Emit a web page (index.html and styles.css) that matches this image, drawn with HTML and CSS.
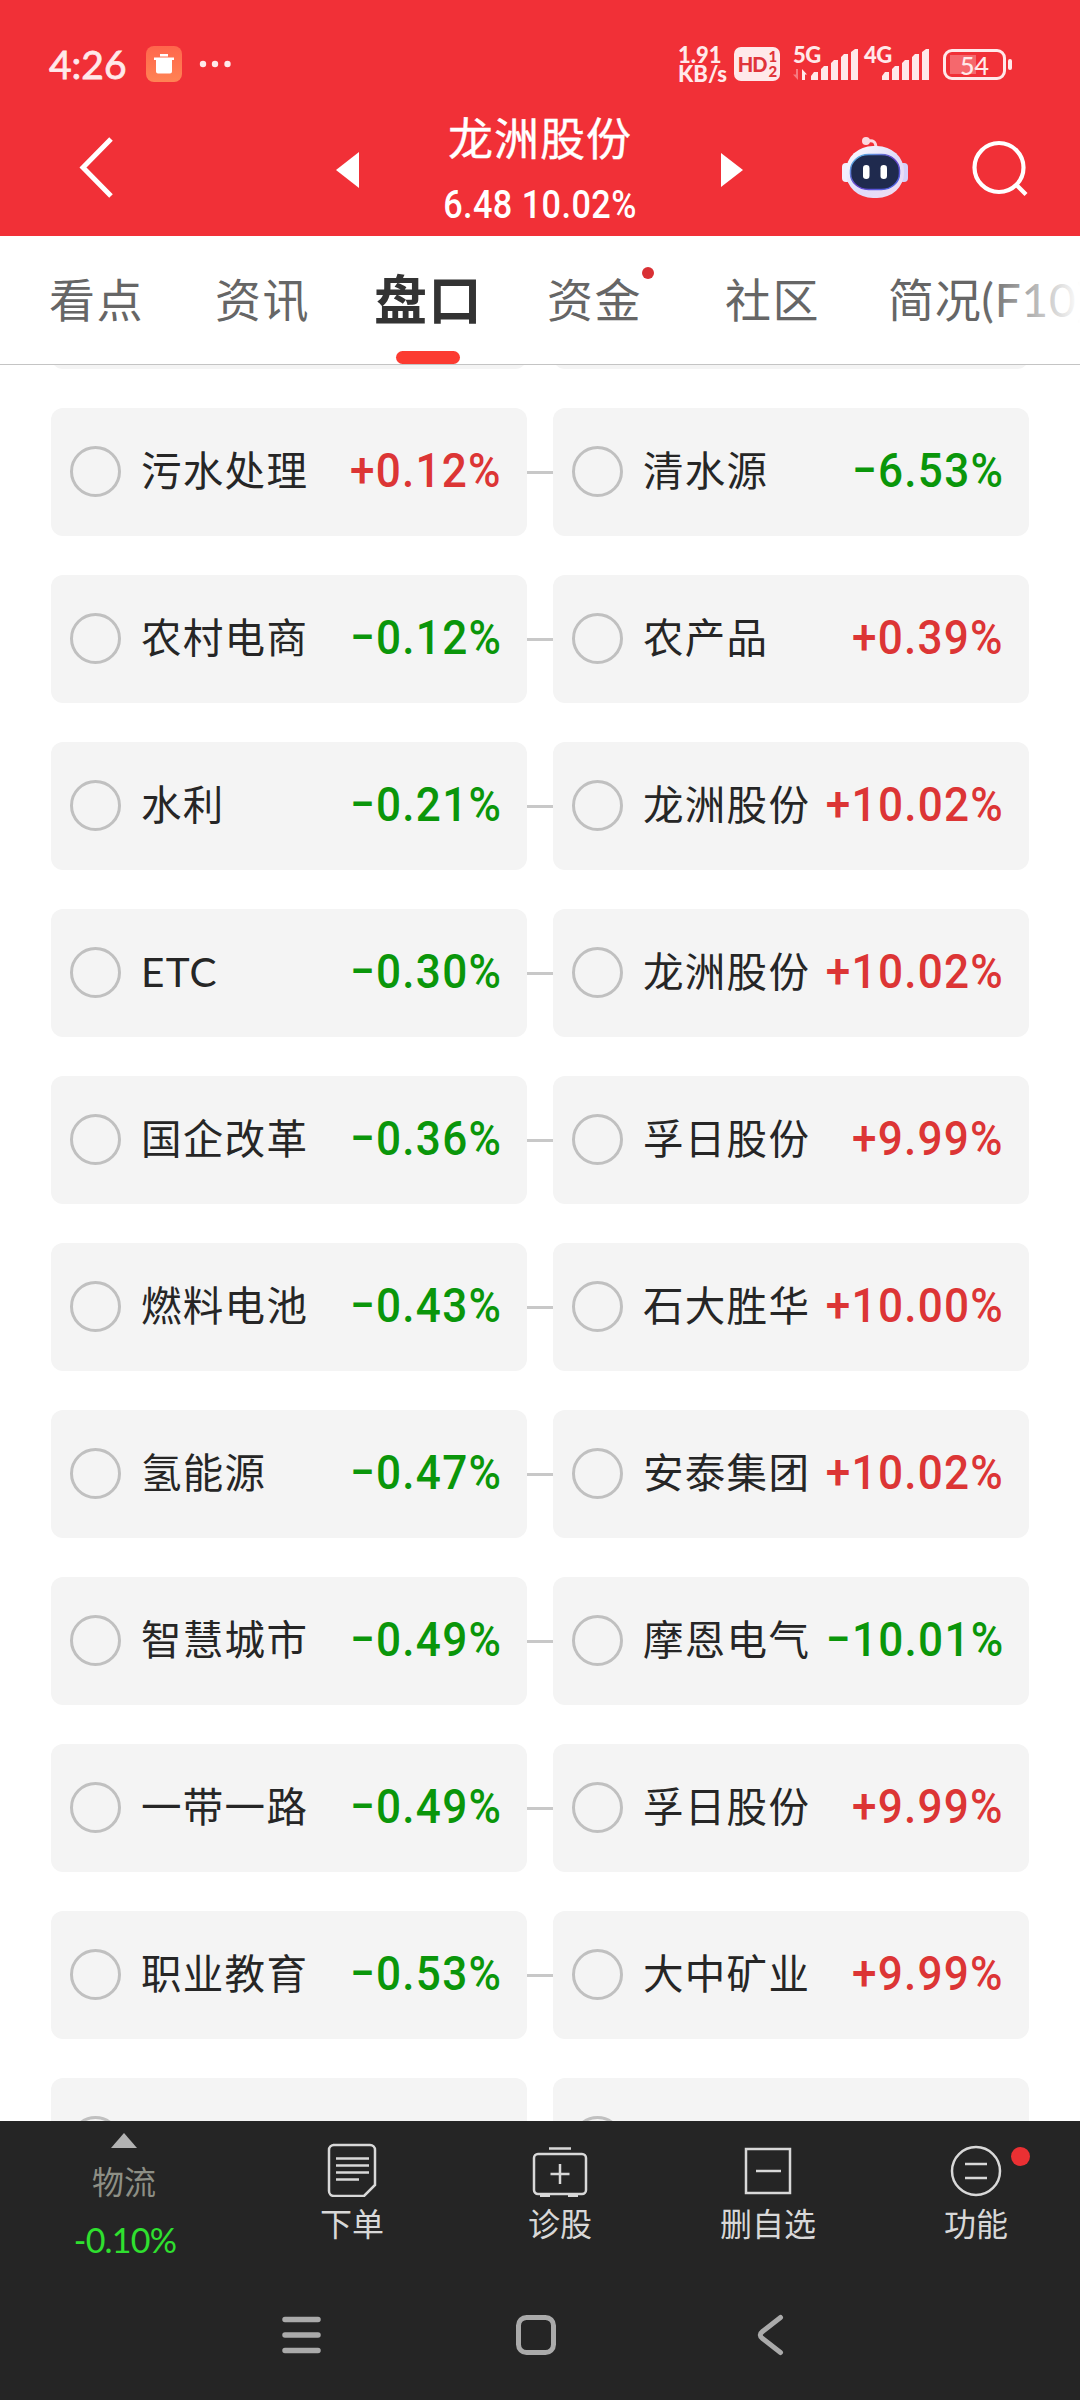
FILE: index.html
```html
<!DOCTYPE html>
<html lang="zh-CN">
<head>
  <meta charset="UTF-8" />
  <meta name="viewport" content="width=device-width, initial-scale=1.0"/>
  <title>龙洲股份 - 盘口</title>
  <link rel="stylesheet" href="styles.css">
</head>
<body>
  <header class="header">
    <div class="status-bar">
      <span class="time">4:26</span>
      <svg class="app-icon" width="36" height="36" viewBox="0 0 36 36">
        <defs>
          <linearGradient id="orange" x1="0" y1="0" x2="0" y2="1">
            <stop offset="0" stop-color="#ff664c"/>
            <stop offset="1" stop-color="#ff8354"/>
          </linearGradient>
        </defs>
        <rect width="36" height="36" rx="8" fill="url(#orange)"/>
        <path d="M14 8h8v2.500h-8zM8 11.500h20v2.500h-2v11.500a2 2 0 0 1-2 2H12a2 2 0 0 1-2-2V14H8z" fill="#fff"/>
      </svg>
      <svg class="more" width="32" height="8" viewBox="0 0 32 8" fill="#ffe9ea">
        <circle cx="4" cy="4" r="3.200"/><circle cx="16" cy="4" r="3.200"/><circle cx="28.500" cy="4" r="3.200"/>
      </svg>
      <div class="speed"><span>1.91</span><span>KB/s</span></div>
      <div class="hd"><b>HD</b><span class="sims"><i>1</i><i>2</i></span></div>
      <div class="signal">
        <span>5G</span>
        <svg width="66" height="32" viewBox="0 0 66 32" fill="#ffe9ea">
          <path d="M5 20v11L0 25.500h3V20z" opacity=".4"/>
          <path d="M9 20l5 5.500h-2V31H9z"/>
          <path d="M18 31v-4l3-4h4v8zM28 31V20l3-3h4v14zM38 31V14l3-3h4v20zM48 31V8l3-3h4v26zM58 31V3l4-3h3v31z"/>
        </svg>
      </div>
      <div class="signal">
        <span>4G</span>
        <svg width="66" height="32" viewBox="0 0 66 32" fill="#ffe9ea">
          <path d="M18 31v-4l3-4h4v8zM28 31V20l3-3h4v14zM38 31V14l3-3h4v20zM48 31V8l3-3h4v26zM58 31V3l4-3h3v31z"/>
        </svg>
      </div>
      <div class="battery"><span>54</span></div>
    </div>

    <div class="title-bar">
      <svg class="back" width="36" height="64" viewBox="0 0 36 64" fill="none" stroke="#fff" stroke-width="5">
        <path d="M33 4L5 32.500L33 61"/>
      </svg>
      <svg class="prev" width="23" height="36" viewBox="0 0 23 36"><path d="M23 0v36L0 18z" fill="#fff"/></svg>
      <div class="stock">
        <h1>龙洲股份</h1>
        <p>6.48 10.02%</p>
      </div>
      <svg class="next" width="22" height="34" viewBox="0 0 22 34"><path d="M0 0v34L22 17z" fill="#fff"/></svg>
      <svg class="robot" width="66" height="64" viewBox="0 0 66 64">
        <defs>
          <linearGradient id="shell" x1="0" y1="0" x2="1" y2="1">
            <stop offset="0" stop-color="#fff"/>
            <stop offset=".55" stop-color="#dfdcfa"/>
            <stop offset="1" stop-color="#f4dcee"/>
          </linearGradient>
          <linearGradient id="rim" x1="0" y1="0" x2="1" y2="1">
            <stop offset="0" stop-color="#59c8e8"/>
            <stop offset=".5" stop-color="#6a41c9"/>
            <stop offset="1" stop-color="#4a6be8"/>
          </linearGradient>
        </defs>
        <path d="M25 5.500c6-2 9 0 9 7" fill="none" stroke="#fbd9e0" stroke-width="3"/>
        <circle cx="24" cy="5" r="4" fill="#fbd9e0"/>
        <rect x="0" y="27" width="9" height="19" rx="4" fill="#f3eefc"/>
        <rect x="57" y="27" width="9" height="19" rx="4" fill="#d5d0f8"/>
        <rect x="4" y="10" width="58" height="52" rx="27" ry="25" fill="url(#shell)"/>
        <rect x="8.500" y="18.500" width="49" height="35" rx="18" ry="16" fill="#1f2a4e" stroke="url(#rim)" stroke-width="1.500"/>
        <rect x="21" y="29" width="6.500" height="14" rx="3.200" fill="#fff"/>
        <rect x="38.500" y="29" width="6.500" height="14" rx="3.200" fill="#fff"/>
      </svg>
      <svg class="search" width="58" height="58" viewBox="0 0 58 58" fill="none" stroke="#fff" stroke-width="4.200">
        <circle cx="27" cy="27.500" r="24.500"/><path d="M44.500 45L54 54.500"/>
      </svg>
    </div>
  </header>

  <nav class="tabs">
    <a>看点</a>
    <a>资讯</a>
    <a class="active">盘口</a>
    <a class="has-dot">资金</a>
    <a>社区</a>
    <a class="wide">简况(F10)</a>
  </nav>

  <main class="list" id="list"></main>

  <footer class="footer">
    <div class="toolbar">
      <div class="sector">
        <svg width="26" height="15" viewBox="0 0 26 15"><path d="M13 0l13 15H0z" fill="#b3b3b3"/></svg>
        <span class="sector-name">物流</span>
        <span class="sector-rate">-0.10%</span>
      </div>
      <div class="tool">
        <svg width="60" height="56" viewBox="0 0 60 56" fill="none" stroke="#d8d8d8" stroke-width="2.500">
          <path d="M11 4h37a5 5 0 0 1 5 5v35L42 55H12a5 5 0 0 1-5-5V9a5 5 0 0 1 5-5z"/>
          <path d="M14 17.500h33M14 24.500h33M14 31.500h33M14 38.500h23"/>
        </svg>
        <span>下单</span>
      </div>
      <div class="tool">
        <svg width="60" height="56" viewBox="0 0 60 56" fill="none" stroke="#d8d8d8" stroke-width="2.500">
          <path d="M19 7.500h22M8 13h44a4 4 0 0 1 4 4v32a4 4 0 0 1-4 4H8a4 4 0 0 1-4-4V17a4 4 0 0 1 4-4zM20.500 33h19M30 23v20"/>
          <path d="M10 54.500h10M38 54.500h10" stroke-width="3"/>
        </svg>
        <span>诊股</span>
      </div>
      <div class="tool">
        <svg width="60" height="56" viewBox="0 0 60 56" fill="none" stroke="#d8d8d8" stroke-width="2.500">
          <path d="M8 8h44v44H8zM18 30h25"/>
        </svg>
        <span>删自选</span>
      </div>
      <div class="tool new">
        <svg width="60" height="56" viewBox="0 0 60 56" fill="none" stroke="#d8d8d8" stroke-width="2.500">
          <circle cx="30" cy="30" r="24"/><path d="M19 23h22M19 37h22"/>
        </svg>
        <span>功能</span>
      </div>
    </div>
    <div class="system-nav">
      <svg width="42" height="42" viewBox="0 0 42 42" fill="none" stroke="#aaa" stroke-width="5.500" stroke-linecap="round">
        <path d="M5 5.500h33M5 21h33M5 36.500h33"/>
      </svg>
      <svg width="42" height="42" viewBox="0 0 42 42" fill="none" stroke="#aaa" stroke-width="5">
        <rect x="3.500" y="3.500" width="35" height="35" rx="8"/>
      </svg>
      <svg width="42" height="42" viewBox="0 0 42 42" fill="none" stroke="#aaa" stroke-width="5" stroke-linecap="round">
        <path d="M30.500 3.500L12.500 17.500Q8 21 12.500 24.500L30.500 38.500"/>
      </svg>
    </div>
  </footer>

  <script>
    const rows = [
      ['', '', '', ''],
      ['污水处理', '+0.12%', '清水源', '−6.53%'],
      ['农村电商', '−0.12%', '农产品', '+0.39%'],
      ['水利', '−0.21%', '龙洲股份', '+10.02%'],
      ['ETC', '−0.30%', '龙洲股份', '+10.02%'],
      ['国企改革', '−0.36%', '孚日股份', '+9.99%'],
      ['燃料电池', '−0.43%', '石大胜华', '+10.00%'],
      ['氢能源', '−0.47%', '安泰集团', '+10.02%'],
      ['智慧城市', '−0.49%', '摩恩电气', '−10.01%'],
      ['一带一路', '−0.49%', '孚日股份', '+9.99%'],
      ['职业教育', '−0.53%', '大中矿业', '+9.99%'],
      ['文化传媒', '', '华闻集团', '']
    ];

    const card = (name, rate) => `
      <div class="card">
        <span class="radio"></span>
        <span class="name">${name}</span>
        <span class="rate ${rate[0] === '+' ? 'up' : 'down'}">${rate}</span>
      </div>`;

    document.getElementById('list').innerHTML = rows
      .map(r => `<div class="row">${card(r[0], r[1])}<span class="link"></span>${card(r[2], r[3])}</div>`)
      .join('');
  </script>
</body>
</html>
```
FILE: styles.css
```css
:root {
  --red: #f13037;
  --up: #dc3535;
  --down: #0a960a;
  --status: #ffe9ea;
  --dark: #252525;
}
* { box-sizing: border-box; }
body {
  margin: 0;
  width: 1080px;
  height: 2400px;
  display: flex;
  flex-direction: column;
  overflow: hidden;
  background: #fff;
  font-family: Lato, "Noto Sans CJK SC", sans-serif;
}
h1, p { margin: 0; font-weight: 400; }
svg { display: block; flex: none; }

/* header */
.header {
  height: 236px;
  flex: none;
  background: var(--red);
  color: #fff;
}
.status-bar {
  height: 110px;
  padding: 18px 74px 0 49px;
  display: flex;
  align-items: center;
  color: var(--status);
}
.time {
  width: 97px;
  font-size: 39px;
  line-height: 40px;
  -webkit-text-stroke: .8px var(--status);
}
.more { margin-left: 17px; }
.speed {
  margin-left: auto;
  width: 56px;
  display: flex;
  flex-direction: column;
  font: 900 22px/19px Lato, sans-serif;
}
.hd {
  width: 46px;
  height: 34px;
  margin-right: 13px;
  border-radius: 7px;
  background: var(--status);
  color: #e0343a;
  display: flex;
  align-items: center;
  justify-content: center;
  font: 900 20px/34px Lato, sans-serif;
  letter-spacing: -1px;
}
.sims { display: flex; flex-direction: column; margin-left: 2px; }
.sims i { font: 900 15px/15px Lato, sans-serif; }
.signal { position: relative; width: 71px; }
.signal svg { margin-top: 2px; }
.signal span {
  position: absolute;
  left: 0;
  top: -3px;
  font: 900 22px/22px Lato, sans-serif;
  letter-spacing: -.5px;
}
.battery {
  position: relative;
  width: 63px;
  height: 31px;
  margin-left: 8px;
  border: 3px solid var(--status);
  border-radius: 9px;
  text-align: center;
  font: 500 25px/26px Lato, sans-serif;
  background: linear-gradient(#f5686d, #f5686d) 4px 3px / 26px 19px no-repeat;
}
.battery::after {
  content: "";
  position: absolute;
  right: -9px;
  top: 7px;
  width: 4px;
  height: 11px;
  border-radius: 2px;
  background: var(--status);
}

.title-bar {
  height: 126px;
  padding: 0 50px 0 78px;
  display: flex;
  align-items: flex-start;
}
.back { margin-top: 25px; }
.prev { margin: 42px 0 0 222px; }
.stock { width: 363px; text-align: center; }
.stock h1 { font-size: 45px; line-height: 59px; letter-spacing: 1px; -webkit-text-stroke: .4px #fff; }
.stock p {
  margin-top: 14px;
  font: 500 38px/44px Roboto, sans-serif;
  letter-spacing: .5px;
  transform: scaleX(.9);
}
.next { margin-top: 43px; }
.robot { margin: 26px 0 0 99px; }
.search { margin: 30px 0 0 64px; }

/* tabs */
.tabs {
  position: relative;
  height: 129px;
  flex: none;
  padding-left: 49px;
  display: flex;
  overflow: hidden;
  border-bottom: 1px solid #c4c4c4;
  color: #666;
  font-size: 46px;
  line-height: 127px;
  letter-spacing: 1.500px;
  white-space: nowrap;
}
.tabs a { flex: none; margin-right: 71px; position: relative; }
.tabs .active {
  color: #333;
  font-size: 53px;
  font-weight: 700;
  margin: 0 64px 0 -7px;
}
.active::after {
  content: "";
  position: absolute;
  left: 22px;
  bottom: 0;
  width: 64px;
  height: 13px;
  border-radius: 7px;
  background: #fc3b31;
}
.tabs .has-dot { margin-right: 83px; }
.has-dot::after {
  content: "";
  position: absolute;
  right: -12px;
  top: 31px;
  width: 12px;
  height: 12px;
  border-radius: 50%;
  background: #d93034;
}
.tabs .wide { margin-left: -3px; letter-spacing: .8px; }
.tabs::after {
  content: "";
  position: absolute;
  right: 0;
  top: 0;
  width: 96px;
  height: 127px;
  background: linear-gradient(to right, rgba(255,255,255,0), #fff);
}

/* concept list */
.list {
  flex: 1;
  min-height: 0;
  overflow: hidden;
  padding: 0 51px;
  display: flex;
  flex-direction: column;
  gap: 39px;
}
.row { flex: none; display: flex; align-items: center; }
.row:first-child { margin-top: -124px; }
.card {
  width: 476px;
  height: 128px;
  padding: 0 25px 3px 19px;
  border-radius: 12px;
  background: #f4f4f4;
  display: flex;
  align-items: center;
}
.link { width: 26px; height: 3px; background: #c8c8c8; }
.radio {
  flex: none;
  width: 51px;
  height: 51px;
  margin-top: 2px;
  border: 3px solid #c0c0c0;
  border-radius: 50%;
}
.name {
  margin: 0 -24px 0 20px;
  color: #262626;
  font-size: 40.500px;
  line-height: 60px;
  letter-spacing: 1.300px;
  white-space: nowrap;
}
.rate {
  margin-left: auto;
  font: 500 49px/60px Roboto, sans-serif;
  letter-spacing: 1.400px;
  transform: scaleX(.9);
  transform-origin: right;
}
.up { color: var(--up); }
.down { color: var(--down); }

/* bottom */
.footer {
  height: 279px;
  flex: none;
  background: var(--dark);
}
.toolbar {
  height: 170px;
  display: grid;
  grid-template-columns: 248px repeat(4, 208px);
}
.sector {
  padding-top: 12px;
  display: flex;
  flex-direction: column;
  align-items: center;
}
.sector-name {
  margin-top: 11px;
  color: #8d8f85;
  font-size: 32px;
  line-height: 46px;
}
.sector-rate {
  margin: 13px 0 0 2px;
  color: #2fe02f;
  font-size: 34px;
  line-height: 44px;
  letter-spacing: -.8px;
}
.tool {
  position: relative;
  padding-top: 20px;
  display: flex;
  flex-direction: column;
  align-items: center;
  color: #d8d8d8;
  font-size: 32px;
  line-height: 46px;
}
.tool span { margin-top: 4px; }
.new::after {
  content: "";
  position: absolute;
  left: 139px;
  top: 26px;
  width: 19px;
  height: 19px;
  border-radius: 50%;
  background: #ea3033;
}
.system-nav {
  padding: 23px 0 0 280px;
  display: flex;
  gap: 193px;
}
```
